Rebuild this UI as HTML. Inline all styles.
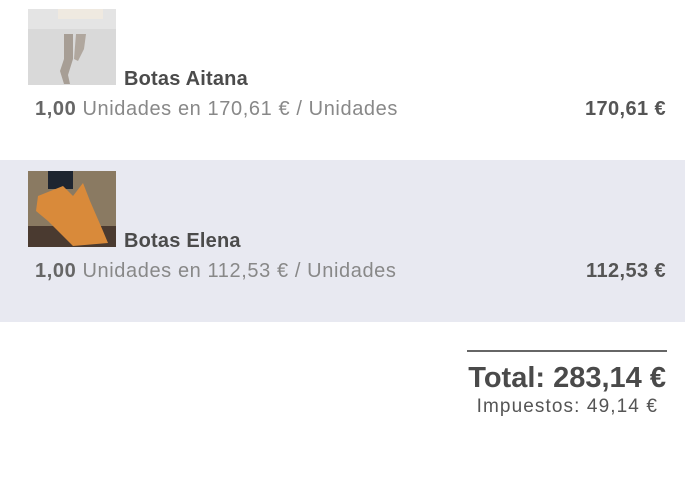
<!DOCTYPE html>
<html><head><meta charset="utf-8"><style>
body{margin:0;width:685px;height:477px;background:#fff;font-family:"Liberation Sans",sans-serif;position:relative;overflow:hidden;color:#4a4a4a}
.a{position:absolute;white-space:nowrap}
.band{position:absolute;left:0;top:160px;width:685px;height:162px;background:#e8e9f1}
.name{font-size:20px;font-weight:bold;color:#4b4b4b;letter-spacing:0.2px}
.line{font-size:20px;color:#888;letter-spacing:0.6px}
.line b{color:#666}
.price{font-size:20px;font-weight:bold;color:#555;letter-spacing:0.4px}
</style></head><body>
<div class="band"></div>
<svg class="a" style="left:28px;top:9px" width="88" height="76">
<rect width="88" height="76" fill="#d9d9d9"/>
<rect x="0" y="0" width="88" height="20" fill="#e4e4e4"/>
<rect x="30" y="0" width="45" height="10" fill="#efe9e0"/>
<path d="M36 25 L45 25 L45 50 L40 66 L42 75 L36 75 L32 62 L36 50Z" fill="#a79e95"/>
<path d="M48 25 L58 25 L56 40 L50 52 L46 50Z" fill="#b0a79e"/>
</svg>
<div class="a name" style="left:124px;top:68px">Botas Aitana</div>
<div class="a line" style="left:35px;top:98px"><b>1,00</b> Unidades en 170,61 € / Unidades</div>
<div class="a price" style="right:19px;top:98px">170,61 €</div>
<svg class="a" style="left:28px;top:171px" width="88" height="76">
<rect width="88" height="76" fill="#8a7a62"/>
<rect x="0" y="55" width="88" height="21" fill="#4a3a30"/>
<rect x="20" y="0" width="25" height="18" fill="#1e2530"/>
<path d="M10 25 L35 15 L45 25 L55 12 L62 30 L75 60 L80 72 L45 75 L20 50 L8 40Z" fill="#d98a3a"/>
</svg>
<div class="a name" style="left:124px;top:230px">Botas Elena</div>
<div class="a line" style="left:35px;top:260px"><b>1,00</b> Unidades en 112,53 € / Unidades</div>
<div class="a price" style="right:19px;top:260px">112,53 €</div>
<div class="a" style="left:467px;top:350px;width:200px;height:2px;background:#666"></div>
<div class="a" style="right:19px;top:362px;font-size:29px;font-weight:bold;color:#4a4a4a;letter-spacing:0px">Total: 283,14 €</div>
<div class="a" style="right:27px;top:396px;font-size:19px;color:#555;letter-spacing:1.1px">Impuestos: 49,14 €</div>
</body></html>
